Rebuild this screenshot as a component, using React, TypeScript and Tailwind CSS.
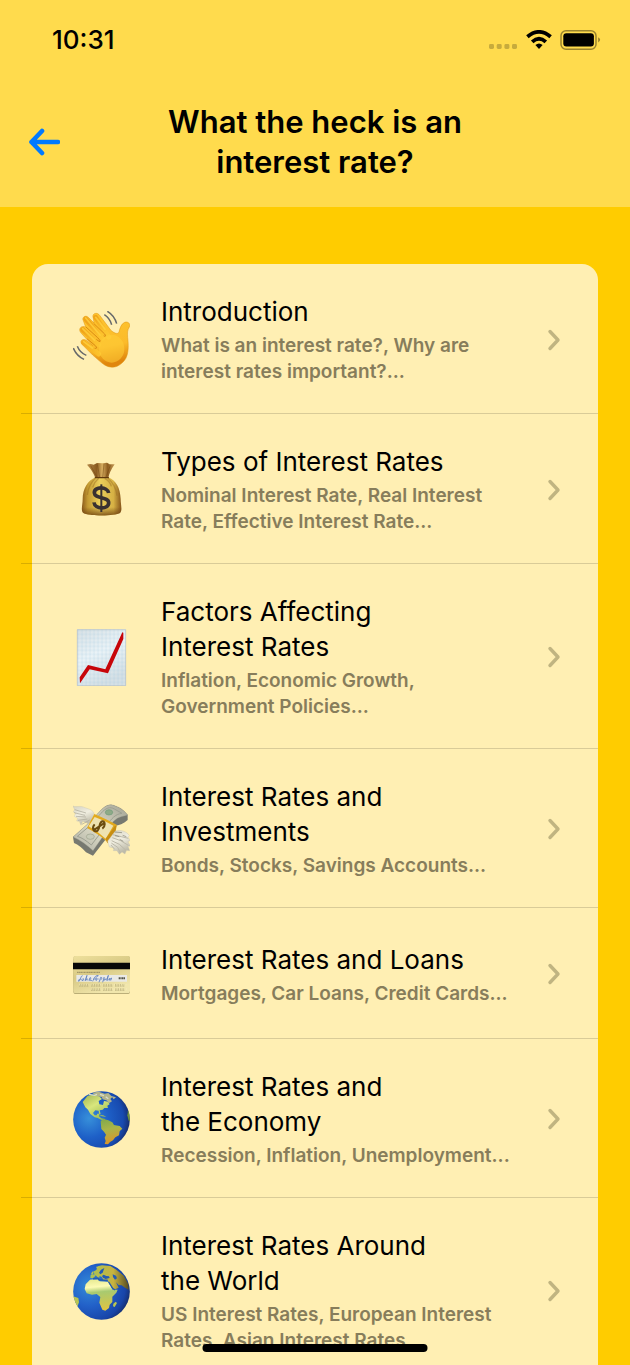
import type { ReactNode } from "react";

function WavingHand() {
  return (
    <svg viewBox="39 47 171 171" className="size-[57px]" aria-hidden="true">
      <defs>
        <radialGradient id="skin" gradientUnits="userSpaceOnUse" cx="158" cy="150" r="100">
          <stop offset="0" stopColor="#ffd23c" />
          <stop offset="0.5" stopColor="#fcc22c" />
          <stop offset="1" stopColor="#f0a41a" />
        </radialGradient>
        <linearGradient id="palm" x1="0" y1="0" x2="0.2" y2="1">
          <stop offset="0" stopColor="#ffc62f" />
          <stop offset="0.7" stopColor="#fbbb2a" />
          <stop offset="1" stopColor="#e0860d" />
        </linearGradient>
      </defs>
      <path
        d="M70 76C64 66 77 58 85 66L102 83L100 68C94 56 110 48 119 60L152 104C160 112 173 119 177 110C180 98 184 85 194 81C204 77 213 86 208 95C202 105 202 112 203 126C207 160 205 188 186 203C170 218 151 219 134 209C124 203 111 190 98 179L66 147C57 137 68 128 79 135L98 151L64 114C52 101 64 89 77 95Z"
        fill="url(#palm)"
        stroke="#de9415"
        strokeWidth="1.5"
      />
      <path
        d="M107 66L146 125M77 71L128 128M68 103L116 148M71 142L116 176"
        stroke="url(#skin)"
        strokeWidth="15"
        strokeLinecap="round"
        fill="none"
      />
      <path d="M107 66L135 102M77 68L120 119M68 100L104 135M71 139L97 158" stroke="#ffd13e" strokeWidth="5" strokeLinecap="round" fill="none" opacity="0.8" />
      <path d="M102 85L134 116Q141 126 132 122M79 96L113 127Q126 141 117 138L110 133M82 131L106 151Q115 161 105 159" stroke="#d98b14" strokeWidth="3" strokeLinecap="round" fill="none" />
      <ellipse cx="155" cy="160" rx="38" ry="42" fill="#ffcd38" opacity="0.55" />
      <path d="M142 48Q163 60 170 85M133 58Q149 68 155 88M40 158Q49 181 72 192M52 153Q60 173 79 180" stroke="#66686a" strokeWidth="4.5" fill="none" />
    </svg>
  );
}

function MoneyBag() {
  return (
    <svg viewBox="39 47 171 171" className="size-[57px]" aria-hidden="true">
      <defs>
        <linearGradient id="bag" x1="0" x2="1">
          <stop offset="0" stopColor="#8b5b1b" />
          <stop offset="0.15" stopColor="#c39a32" />
          <stop offset="0.45" stopColor="#ecd05c" />
          <stop offset="0.8" stopColor="#d6b144" />
          <stop offset="1" stopColor="#87551a" />
        </linearGradient>
        <linearGradient id="bagBase" x1="0" y1="0" x2="0" y2="1">
          <stop offset="0.78" stopColor="#6d400f" stopOpacity="0" />
          <stop offset="1" stopColor="#6d400f" stopOpacity="0.8" />
        </linearGradient>
        <linearGradient id="ruffle" x1="0" x2="1">
          <stop offset="0" stopColor="#b58a4a" />
          <stop offset="0.35" stopColor="#8c5c20" />
          <stop offset="0.55" stopColor="#d7ae60" />
          <stop offset="0.75" stopColor="#8c5b1e" />
          <stop offset="1" stopColor="#c69c58" />
        </linearGradient>
      </defs>
      <path d="M81 58Q91 54 101 58L111 53L127 54L141 52L149 57L164 57Q148 80 145 98H106Q99 77 81 58Z" fill="url(#ruffle)" />
      <path d="M92 61L111 95M112 57L119 95M132 56L128 95M151 60L138 95" stroke="#70450f" strokeWidth="3" opacity="0.45" />
      <path d="M107 96H145C169 106 180 128 182 161C182 177 188 196 180 203C164 213 85 213 69 202C62 194 68 178 68 162C68 130 83 106 107 96Z" fill="url(#bag)" />
      <path d="M107 96H145C169 106 180 128 182 161C182 177 188 196 180 203C164 213 85 213 69 202C62 194 68 178 68 162C68 130 83 106 107 96Z" fill="url(#bagBase)" />
      <path d="M106 99Q85 119 82 149M116 99Q103 110 98 126M144 99Q167 119 171 151M134 99Q150 107 154 123" fill="none" stroke="#986a21" strokeWidth="4" opacity="0.45" />
      <path d="M106 97H145" stroke="#5f380d" strokeWidth="4" strokeLinecap="round" />
      <path d="M146 143C143 123 102 122 103 143C104 161 146 153 146 172C146 194 104 192 102 171" fill="none" stroke="#393131" strokeWidth="11" />
      <path d="M124 117V200" stroke="#393131" strokeWidth="6" />
    </svg>
  );
}

function RisingChart() {
  return (
    <svg viewBox="39 53 171 171" className="size-[57px]" aria-hidden="true">
      <defs>
        <linearGradient id="paper" x1="0" y1="0" x2="0.4" y2="1">
          <stop offset="0" stopColor="#d9dde0" />
          <stop offset="0.5" stopColor="#f4f8fb" />
          <stop offset="1" stopColor="#d5dce1" />
        </linearGradient>
        <pattern id="chartGrid" x="51" y="54" width="12" height="12" patternUnits="userSpaceOnUse">
          <path d="M0 3H12M3 0V12" stroke="#b7d6e6" strokeWidth="1.6" />
          <path d="M0 9H12M9 0V12" stroke="#d6e5ee" strokeWidth="1" />
        </pattern>
      </defs>
      <path d="M51 54H198V224H51Z" fill="url(#paper)" />
      <path d="M51 54H198V224H51Z" fill="url(#chartGrid)" />
      <path d="M52 55H197V223H52Z" fill="none" stroke="#b8c0c3" strokeWidth="2" />
      <path d="M59 198L84 161L136 174L187 63L190 64V83L144 186L89 174L60 216Z" fill="#c70509" />
    </svg>
  );
}

function FlyingMoney() {
  return (
    <svg viewBox="39 44 171 171" className="size-[57px]" aria-hidden="true">
      <defs>
        <linearGradient id="feather" x1="0" y1="0" x2="0.4" y2="1">
          <stop offset="0" stopColor="#d5d2c1" />
          <stop offset="0.5" stopColor="#f0eee0" />
          <stop offset="1" stopColor="#bdbaa9" />
        </linearGradient>
        <linearGradient id="note" x1="0" y1="1" x2="1" y2="0">
          <stop offset="0" stopColor="#adada0" />
          <stop offset="0.45" stopColor="#dddcc8" />
          <stop offset="1" stopColor="#a2a293" />
        </linearGradient>
      </defs>
      <path d="M39 59C50 64 60 56 75 64C90 69 100 72 102 82L96 98L84 111L68 105L63 117L58 105L50 104L53 96L43 90L47 80L40 77L44 70Z" fill="url(#feather)" stroke="#c1beac" />
      <path d="M44 70L78 80M42 79L75 87M48 90L78 92M54 102L82 98M66 114L89 101" stroke="#a9a697" strokeWidth="2" />
      <path d="M39 152L84 112L107 89C123 71 141 47 164 58C179 64 190 69 203 86V101C190 113 177 116 164 119L145 149L99 208L78 198Q61 178 42 170Z" fill="#777970" />
      <path d="M39 152L84 112L107 89C123 71 141 47 164 58C179 64 190 69 203 86C184 92 171 91 155 112L134 143L99 193C81 177 62 161 39 152Z" fill="url(#note)" stroke="#898b7f" />
      <path d="M52 150L84 123L123 81C136 65 151 60 163 68L186 81C165 83 154 99 144 111L94 176C78 163 68 155 52 150Z" fill="none" stroke="#9da092" strokeWidth="3" />
      <ellipse cx="91" cy="151" rx="12" ry="8" fill="#c8cbb8" stroke="#9ca18d" strokeWidth="2" />
      <ellipse cx="147" cy="78" rx="11" ry="8" fill="#8eaa87" stroke="#6f9c7a" strokeWidth="2" />
      <path d="M81 125L103 83Q143 100 171 116L142 167Q117 144 81 125Z" fill="#e2a91d" />
      <path d="M86 120L104 92Q138 105 160 118L137 157Q114 136 86 120Z" fill="#eee2b1" />
      <path d="M104 114C94 124 101 141 113 133C121 125 116 108 127 105C137 104 136 121 127 127M100 132L135 109" fill="none" stroke="#6b4c10" strokeWidth="6" />
      <path d="M137 157L165 118L170 119L167 134L142 171Z" fill="#c88e12" />
      <path d="M143 164L166 134C180 130 199 133 208 148L204 153L211 162L204 166L211 179L204 180L209 193L199 192L195 203L186 197L178 204L171 193L160 193L162 185L148 182Z" fill="url(#feather)" stroke="#c1beac" />
      <path d="M158 145L184 151L205 156M157 154L182 163L205 177M155 163L178 174L199 193M154 170L173 183L181 199M153 176L164 189" fill="none" stroke="#bcb9a9" strokeWidth="3" />
      <path d="M164 137L186 139M165 148L178 151M188 147L199 151M179 159L190 165" stroke="#817e72" strokeWidth="2" />
    </svg>
  );
}

function CreditCard() {
  return (
    <svg viewBox="39 45 171 171" className="size-[57px]" aria-hidden="true">
      <defs>
        <linearGradient id="gold" x1="0" y1="0" x2="0.5" y2="1">
          <stop offset="0" stopColor="#eee09c" />
          <stop offset="0.5" stopColor="#d9ca85" />
          <stop offset="1" stopColor="#f1e6ac" />
        </linearGradient>
      </defs>
      <rect x="40" y="76" width="170" height="113" rx="7" fill="#aa9d68" />
      <rect x="40" y="75" width="170" height="112" rx="7" fill="url(#gold)" />
      <path d="M39 95H210V115H39Z" fill="#080808" />
      <path d="M51 124H120" stroke="#756d4d" strokeWidth="2" strokeDasharray="5 1 3 1" />
      <path d="M49 132H201V152H49Z" fill="#e9e9e5" />
      <path d="M68 134C60 134 64 149 56 151Q51 148 62 143M67 143Q62 149 69 149Q74 143 69 142M75 149L81 133L77 149Q83 138 84 149M88 149Q96 139 90 140Q84 150 96 148M98 151Q106 130 115 134Q105 137 109 150M100 144H116M117 154L122 139Q130 139 121 148M128 154L132 139Q138 142 131 148L141 144L145 133L141 149Q149 139 151 143L147 148L155 141L152 149" fill="none" stroke="#5c7dbd" strokeWidth="2.4" />
      <path d="M176 142H196" stroke="#555549" strokeWidth="6" strokeDasharray="4 1" />
      <path d="M57 163H201M93 176H201" stroke="#b5aa78" strokeWidth="8" strokeDasharray="5 2 6 2 5 2 6 8" opacity="0.6" />
      <path d="M57 161H201M93 174H201" stroke="#f7edb9" strokeWidth="5" strokeDasharray="3 4" opacity="0.7" />
    </svg>
  );
}

function AmericasGlobe() {
  return (
    <svg viewBox="39 48 171 171" className="size-[57px]" aria-hidden="true">
      <defs>
        <radialGradient id="oceanA" cx="0.28" cy="0.48" r="0.75">
          <stop offset="0" stopColor="#3790da" />
          <stop offset="0.45" stopColor="#1e60c7" />
          <stop offset="0.8" stopColor="#174aaf" />
          <stop offset="1" stopColor="#152660" />
        </radialGradient>
        <linearGradient id="landA" x1="0.2" y1="0" x2="0.8" y2="1">
          <stop offset="0" stopColor="#a9bd59" />
          <stop offset="0.4" stopColor="#d8e67c" />
          <stop offset="1" stopColor="#8fb34c" />
        </linearGradient>
        <linearGradient id="landSouth" x1="0" y1="0" x2="0.2" y2="1">
          <stop offset="0" stopColor="#7fa84c" />
          <stop offset="0.45" stopColor="#a9b548" />
          <stop offset="1" stopColor="#d9962a" />
        </linearGradient>
        <clipPath id="sphereA"><circle cx="124.5" cy="133.5" r="85" /></clipPath>
      </defs>
      <circle cx="124.5" cy="133.5" r="85" fill="url(#oceanA)" />
      <g clipPath="url(#sphereA)">
        <path d="M68 81L83 62L106 58L119 65L126 72L116 78L118 88L129 90L132 78L145 80L149 88L142 92L144 99L133 99L128 104L119 106L122 118L117 116L116 107L106 106L99 114L104 121L110 121L112 116L119 116L117 124L124 130L136 132L131 137L120 133L113 129L104 127L91 117L84 104L76 97Z" fill="url(#landA)" />
        <path d="M96 53L116 50L134 56L145 54L157 66L151 72L156 79L148 84L139 76L128 73L125 66L111 64ZM154 63L168 67L161 73Z" fill="#b3b58a" />
        <path d="M87 58L104 61L111 58M120 58L132 62M137 65L145 71" stroke="#d9ddcb" strokeWidth="4" fill="none" />
        <path d="M116 119L130 121L139 126L126 124Z" fill="#9fb85a" />
        <path d="M122 138L130 132L145 136L157 142L162 150L179 153L187 161L179 169L177 181L166 187L159 196L150 201L144 208L134 207L137 198L134 188L138 179L132 170L124 162Z" fill="url(#landSouth)" />
        <path d="M210 101L204 109L202 121L206 137L211 138Z" fill="#709339" />
      </g>
    </svg>
  );
}

function AfricaGlobe() {
  return (
    <svg viewBox="39 41 171 171" className="size-[57px]" aria-hidden="true">
      <defs>
        <radialGradient id="oceanB" cx="0.28" cy="0.4" r="0.8">
          <stop offset="0" stopColor="#348bd8" />
          <stop offset="0.45" stopColor="#2260c8" />
          <stop offset="0.8" stopColor="#1845a8" />
          <stop offset="1" stopColor="#142352" />
        </radialGradient>
        <linearGradient id="landB" x1="0" y1="0" x2="0.1" y2="1">
          <stop offset="0" stopColor="#e4e78c" />
          <stop offset="0.28" stopColor="#fdfbb4" />
          <stop offset="0.45" stopColor="#a8ca70" />
          <stop offset="1" stopColor="#dcc544" />
        </linearGradient>
        <linearGradient id="landC" x1="0" x2="1">
          <stop offset="0" stopColor="#aac353" />
          <stop offset="0.6" stopColor="#c7b340" />
          <stop offset="1" stopColor="#564d22" />
        </linearGradient>
        <clipPath id="sphereB"><circle cx="124.5" cy="126.5" r="85" /></clipPath>
      </defs>
      <circle cx="124.5" cy="126.5" r="85" fill="url(#oceanB)" />
      <g clipPath="url(#sphereB)">
        <path d="M91 86L92 76L104 75L99 67L109 62L113 51L126 48L151 50L169 61L191 79L205 104L206 121L195 115L185 108L176 107L168 99L176 115L162 121L153 110L143 93L131 92L125 83L119 80L117 88L107 78L101 87Z" fill="url(#landC)" />
        <path d="M90 91L113 89L119 96L144 97L150 107L158 121L173 121L169 130L157 142L157 158L149 166L147 176L136 184L127 181L118 160L121 143L110 134L96 136L80 132L74 119L77 105Z" fill="url(#landB)" />
        <path d="M167 157L171 161L164 173L159 171L160 163ZM39 141L55 146L57 159L51 175L39 161ZM97 66L101 71L97 77L93 74ZM108 52L119 52L111 58Z" fill="#b9c551" />
        <path d="M126 80L131 76L139 80L147 81L149 86L137 89L129 85ZM158 75L168 79L171 87L165 91L159 83Z" fill="#245bb4" />
        <path d="M123 61L133 56L128 70L121 75L117 70Z" fill="#245bb4" />
        <path d="M146 98L158 117L165 122" fill="none" stroke="#255caf" strokeWidth="4" />
        <path d="M99 88L115 87L117 91L127 92L143 93" stroke="#255caf" strokeWidth="5" fill="none" />
      </g>
    </svg>
  );
}

function StatusBar() {
  return (
    <div className="flex h-20 items-center justify-between pl-[52px] pr-[29px]">
      <time className="text-[26px] leading-8 font-medium">10:31</time>
      <div className="flex items-center gap-2">
        <svg viewBox="0 0 29 20" className="h-5 w-[29px]" aria-hidden="true">
          <g fill="#000" fillOpacity="0.22">
            <rect y="14" width="5" height="5" rx="1.4" />
            <rect x="7.7" y="14" width="5" height="5" rx="1.4" />
            <rect x="15.4" y="14" width="5" height="5" rx="1.4" />
            <rect x="23" y="14" width="5" height="5" rx="1.4" />
          </g>
        </svg>
        <svg viewBox="0 0 26 20" className="h-5 w-[26px]" aria-hidden="true">
          <g fill="none" stroke="#000" strokeWidth="3.8">
            <path d="M1.4 6.8Q13 -3 24.6 6.8" />
            <path d="M6.2 11.8Q13 5.8 19.8 11.8" />
          </g>
          <path d="M9.4 15Q13 12 16.6 15L13 19Z" />
        </svg>
        <svg viewBox="0 0 41 20" className="h-5 w-[41px]" aria-hidden="true">
          <rect x="1" y="0.8" width="35" height="18.4" rx="5" fill="none" stroke="#000" strokeOpacity="0.4" strokeWidth="1.5" />
          <rect x="3.3" y="3.2" width="30.6" height="13.4" rx="3" />
          <path d="M38.2 7.3Q42 9.8 38.2 12.5Z" fillOpacity="0.42" />
        </svg>
      </div>
    </div>
  );
}

type Lesson = { icon: ReactNode; title: string[]; topics: string[] };

const lessons: Lesson[] = [
  { icon: <WavingHand />, title: ["Introduction"], topics: ["What is an interest rate?, Why are", "interest rates important?..."] },
  { icon: <MoneyBag />, title: ["Types of Interest Rates"], topics: ["Nominal Interest Rate, Real Interest", "Rate, Effective Interest Rate..."] },
  { icon: <RisingChart />, title: ["Factors Affecting", "Interest Rates"], topics: ["Inflation, Economic Growth,", "Government Policies..."] },
  { icon: <FlyingMoney />, title: ["Interest Rates and", "Investments"], topics: ["Bonds, Stocks, Savings Accounts..."] },
  { icon: <CreditCard />, title: ["Interest Rates and Loans"], topics: ["Mortgages, Car Loans, Credit Cards..."] },
  { icon: <AmericasGlobe />, title: ["Interest Rates and", "the Economy"], topics: ["Recession, Inflation, Unemployment..."] },
  { icon: <AfricaGlobe />, title: ["Interest Rates Around", "the World"], topics: ["US Interest Rates, European Interest", "Rates, Asian Interest Rates..."] },
];

function LessonRow({ icon, title, topics }: Lesson) {
  return (
    <li className="relative">
      <a href="#lesson" className="flex min-h-[131px] items-center pt-[30px] pr-[37px] pb-[29px] pl-[41px]">
        <span className="shrink-0">{icon}</span>
        <span className="ml-[31px] flex-1">
          <span className="block text-[26px] leading-[35px]">
            {title.map((line) => (
              <span key={line} className="block whitespace-nowrap">{line}</span>
            ))}
          </span>
          <span className="mt-1 block text-[19px] leading-[26px] font-semibold text-[#877d5b]">
            {topics.map((line) => (
              <span key={line} className="block whitespace-nowrap">{line}</span>
            ))}
          </span>
        </span>
        <svg viewBox="0 0 14 22" className="h-[22px] w-[14px] shrink-0" aria-hidden="true">
          <path d="M3 2.5L11 11L3 19.5" fill="none" stroke="#c0b481" strokeWidth="3.4" strokeLinecap="round" strokeLinejoin="round" />
        </svg>
      </a>
      <span className="absolute right-0 bottom-0 -left-[11px] h-px bg-black/15" />
    </li>
  );
}

export default function App() {
  return (
    <div className="relative flex h-screen flex-col overflow-hidden bg-[#ffcc00] font-['Inter',sans-serif] text-black">
      <header className="shrink-0 bg-[#ffdb4d]">
        <StatusBar />
        <div className="grid grid-cols-[60px_1fr_60px] items-center pt-[22px] pb-[25px]">
          <button type="button" aria-label="Back" className="ml-7 w-8">
            <svg viewBox="0 0 32 28" className="h-7 w-8" aria-hidden="true">
              <path d="M14 3L3.5 14L14 25M3.5 14H30" fill="none" stroke="#007aff" strokeWidth="4.6" strokeLinecap="round" strokeLinejoin="round" />
            </svg>
          </button>
          <h1 className="text-center text-[31px] leading-[40px] font-semibold">
            What the heck is an
            <br />
            interest rate?
          </h1>
        </div>
      </header>
      <main className="min-h-0 flex-1 overflow-y-auto px-8 pt-[57px] [scrollbar-width:none]">
        <ul className="rounded-t-2xl bg-[#ffefb3]">
          {lessons.map((lesson) => (
            <LessonRow key={lesson.title.join(" ")} {...lesson} />
          ))}
        </ul>
      </main>
      <div className="absolute bottom-[13px] left-1/2 h-2 w-[225px] -translate-x-1/2 rounded-full bg-black" />
    </div>
  );
}
